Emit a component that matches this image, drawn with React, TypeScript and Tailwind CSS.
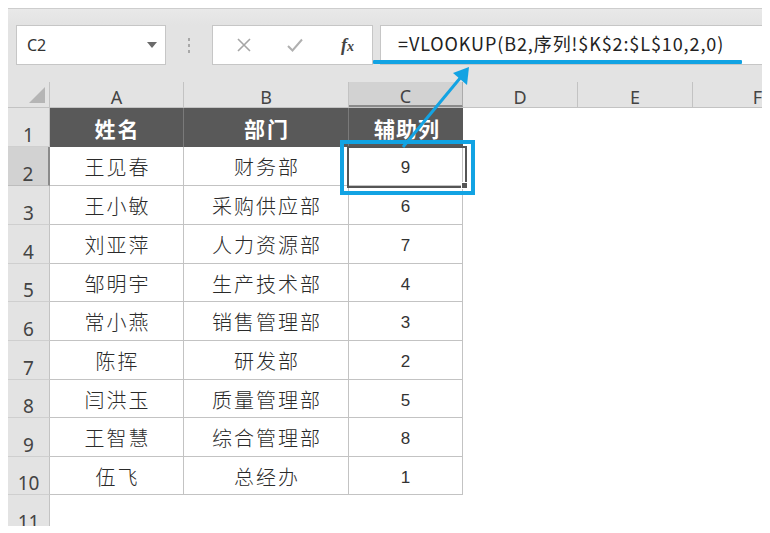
import React from "react";

const rows = [
  { n: "2", name: "王见春", dept: "财务部", v: "9", h: "h-[39px]" },
  { n: "3", name: "王小敏", dept: "采购供应部", v: "6", h: "h-[39px]" },
  { n: "4", name: "刘亚萍", dept: "人力资源部", v: "7", h: "h-[39px]" },
  { n: "5", name: "邹明宇", dept: "生产技术部", v: "4", h: "h-[38px]" },
  { n: "6", name: "常小燕", dept: "销售管理部", v: "3", h: "h-[39px]" },
  { n: "7", name: "陈挥", dept: "研发部", v: "2", h: "h-[39px]" },
  { n: "8", name: "闫洪玉", dept: "质量管理部", v: "5", h: "h-[38px]" },
  { n: "9", name: "王智慧", dept: "综合管理部", v: "8", h: "h-[39px]" },
  { n: "10", name: "伍飞", dept: "总经办", v: "1", h: "h-[38px]" },
];

const cjk = { fontFamily: '"Noto Sans CJK SC", "Noto Sans", sans-serif' };
const latin = { fontFamily: '"Noto Sans", sans-serif' };

export default function App() {
  return (
    <div className="relative w-[770px] h-[533px] bg-white overflow-hidden px-[8px] pt-[8px]">
      <div className="flex flex-col bg-[#e3e3e3] h-[518px]">
        {/* top ribbon strip */}
        <div className="h-[17px] border-t border-[#cdcdcd] bg-gradient-to-b from-[#e9e9e9] to-[#e3e3e3]" />
        {/* formula bar */}
        <div className="flex h-[40px] items-stretch">
          <div className="ml-[8px] w-[150px] bg-white border border-[#c6c6c6] flex items-center justify-between pl-[10px] pr-[8px]">
            <span className="text-[16px] text-[#333]" style={latin}>C2</span>
            <svg width="10" height="6" viewBox="0 0 10 6"><path d="M0 0 L10 0 L5 6 Z" fill="#6a6a6a" /></svg>
          </div>
          <div className="w-[46px] flex flex-col items-center justify-center gap-[3px]">
            <div className="w-[2px] h-[3px] bg-[#a8a8a8]" />
            <div className="w-[2px] h-[3px] bg-[#a8a8a8]" />
            <div className="w-[2px] h-[3px] bg-[#a8a8a8]" />
          </div>
          <div className="w-[161px] bg-white border border-[#c6c6c6] flex items-center">
            <svg className="ml-[24px]" width="14" height="14" viewBox="0 0 14 14"><path d="M1 1 L13 13 M13 1 L1 13" stroke="#a6a6a6" strokeWidth="1.6" /></svg>
            <svg className="ml-[36px]" width="16" height="14" viewBox="0 0 16 14"><path d="M1 8 L5.5 12.5 L15 1.5" stroke="#b0b0b0" strokeWidth="2" fill="none" /></svg>
            <span className="ml-[38px] text-[18px] italic font-bold text-[#444]" style={{ fontFamily: '"Liberation Serif", serif' }}>f<span className="text-[14px]">x</span></span>
          </div>
          <div className="ml-[7px] flex-1 bg-white border-y border-l border-[#c6c6c6] flex items-center pl-[17px] pb-[3px]">
            <span className="text-[18px] text-[#222] tracking-[0.9px] whitespace-nowrap" style={cjk}>=VLOOKUP(B2,序列!$K$2:$L$10,2,0)</span>
          </div>
        </div>
        <div className="h-[17px]" />
        {/* column headers */}
        <div className="flex h-[26px] border-b border-[#c3c3c3] text-[18px] text-[#444]" style={latin}>
          <div className="w-[42px] relative border-r border-[#c3c3c3]">
            <svg className="absolute right-[4px] bottom-[4px]" width="16" height="16" viewBox="0 0 16 16"><path d="M16 0 L16 16 L0 16 Z" fill="#b5b5b5" /></svg>
          </div>
          <div className="w-[134px] flex items-center justify-center pt-[5px] border-r border-[#c3c3c3]">A</div>
          <div className="w-[165px] flex items-center justify-center pt-[5px] border-r border-[#c3c3c3]">B</div>
          <div className="w-[114px] flex items-center justify-center pt-[5px] bg-[#d2d2d2] border-r border-[#ababab] border-b-2 border-b-[#8a8a8a]">C</div>
          <div className="w-[115px] flex items-center justify-center pt-[5px] border-r border-[#c3c3c3]">D</div>
          <div className="w-[115px] flex items-center justify-center pt-[5px] border-r border-[#c3c3c3]">E</div>
          <div className="flex-1 flex items-center justify-end pt-[5px]">F</div>
        </div>
        {/* body */}
        <div className="flex flex-col flex-1">
          {/* header row 1 */}
          <div className="flex h-[39px]">
            <div className="w-[42px] flex items-end justify-center text-[19px] leading-[22px] text-[#444] border-r border-[#c3c3c3] border-b border-b-[#cfcfcf]" style={latin}>
              <span>1</span>
            </div>
            <div className="flex-1 flex bg-white">
              <div className="w-[134px] bg-[#595959] border-r border-[#7a7a7a] flex items-center justify-center pt-[3px] pl-[2px] text-white font-bold text-[21px] tracking-[2px]" style={cjk}>姓名</div>
              <div className="w-[165px] bg-[#595959] border-r border-[#7a7a7a] flex items-center justify-center pt-[3px] pl-[2px] text-white font-bold text-[21px] tracking-[2px]" style={cjk}>部门</div>
              <div className="w-[114px] bg-[#595959] flex items-center justify-center pt-[3px] pl-[2px] text-white font-bold text-[21px] tracking-[1px]" style={cjk}>辅助列</div>
            </div>
          </div>
          {rows.map((r) => (
            <div key={r.n} className={`flex ${r.h}`}>
              <div
                className={
                  r.n === "2"
                    ? "w-[42px] flex items-end justify-center text-[19px] leading-[22px] text-[#444] bg-[#d2d2d2] border-r-2 border-[#8a8a8a] border-b border-b-[#bdbdbd]"
                    : "w-[42px] flex items-end justify-center text-[19px] leading-[22px] text-[#444] border-r border-[#c3c3c3] border-b border-b-[#cfcfcf]"
                }
                style={latin}
              >
                <span>{r.n}</span>
              </div>
              <div className="flex-1 flex bg-white">
                <div className="w-[134px] border-r border-b border-[#c3c3c3] flex items-center justify-center pt-[2px] pl-[2px] text-[20px] tracking-[2px] font-light text-[#2a2a2a]" style={cjk}>{r.name}</div>
                <div className="w-[165px] border-r border-b border-[#c3c3c3] flex items-center justify-center pt-[2px] pl-[2px] text-[20px] tracking-[2px] font-light text-[#2a2a2a]" style={cjk}>{r.dept}</div>
                <div className="w-[114px] border-r border-b border-[#c3c3c3] flex items-center justify-center pt-[4px] text-[17px] text-[#333]" style={{ fontFamily: '"Liberation Sans", sans-serif' }}>{r.v}</div>
              </div>
            </div>
          ))}
          <div className="flex flex-1">
            <div className="w-[42px] flex items-end justify-center text-[19px] text-[#444] border-r border-[#c3c3c3] overflow-hidden leading-[20px]" style={latin}>
              <span className="translate-y-[6px]">11</span>
            </div>
            <div className="flex-1 bg-white" />
          </div>
        </div>
      </div>

      {/* blue underline under formula */}
      <div className="absolute left-[373px] top-[60px] w-[369px] h-[4px] bg-[#12a3e3] rounded-[1px]" />
      {/* selection outline */}
      <div className="absolute left-[340px] top-[140px] w-[135px] h-[55px] border-[4px] border-[#12a3e3]" />
      <div className="absolute left-[347px] top-[146px] w-[120px] h-[42px] border-2 border-[#555]" />
      <div className="absolute left-[461px] top-[182px] w-[7px] h-[7px] bg-[#555] border border-white" />
      {/* arrow */}
      <svg className="absolute left-0 top-0" width="770" height="533" viewBox="0 0 770 533">
        <line x1="403" y1="147" x2="461" y2="77" stroke="#12a3e3" strokeWidth="3" />
        <path d="M469 67 L467 85 L453 73 Z" fill="#12a3e3" />
      </svg>
    </div>
  );
}
